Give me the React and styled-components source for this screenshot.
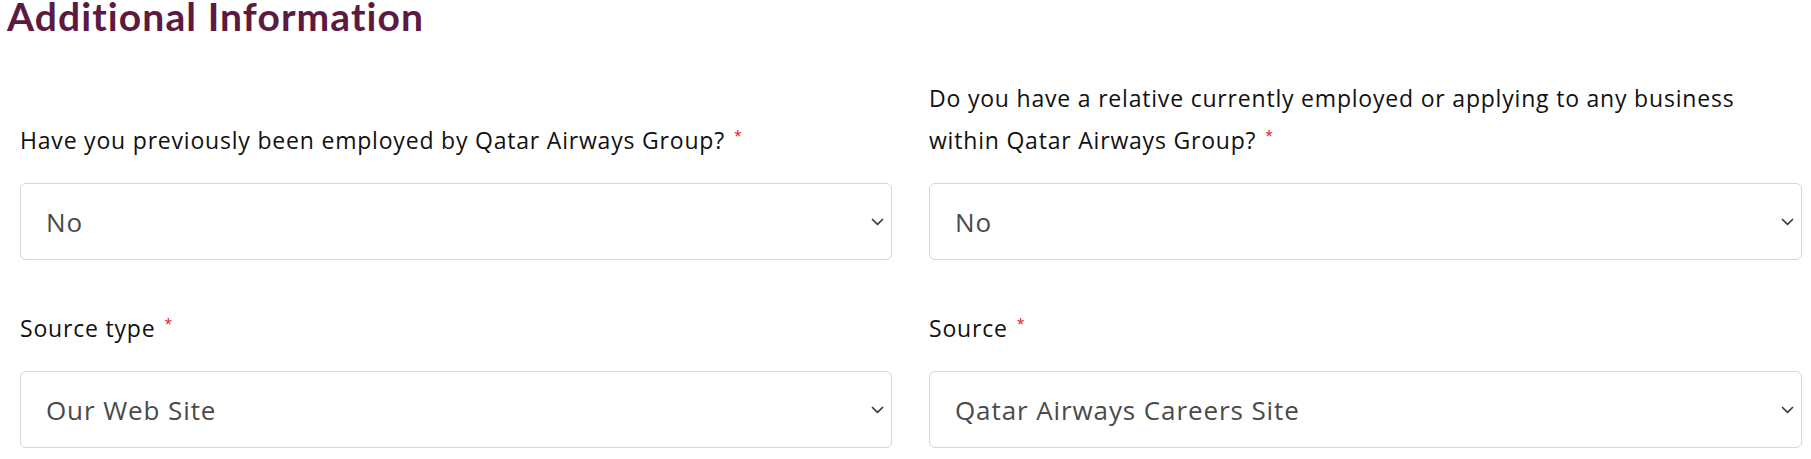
import React from "react";
import styled, { createGlobalStyle } from "styled-components";

const Global = createGlobalStyle`
  html, body { margin: 0; padding: 0; background: #ffffff; }
  body { font-family: "Open Sans", Lato, sans-serif; }
  * { box-sizing: border-box; }
`;

const Page = styled.div`
  padding: 0 9px 0 7px;
  width: 1811px;
`;

const Heading = styled.h2`
  margin: 0 0 45px 0;
  font-family: Lato, sans-serif;
  font-weight: 700;
  font-size: 39px;
  line-height: 32px;
  color: #5c1a42;
  letter-spacing: 1.1px;
`;

const Grid = styled.div`
  display: grid;
  grid-template-columns: 872px 873px;
  column-gap: 37px;
  row-gap: 47px;
  padding-left: 13px;
  align-items: end;
`;

const Field = styled.div`
  display: flex;
  flex-direction: column;
  justify-content: flex-end;
`;

const Label = styled.label`
  display: block;
  font-family: "Open Sans", sans-serif;
  font-size: 23px;
  letter-spacing: 0.8px;
  line-height: 42px;
  color: #111111;
  margin-bottom: 22px;
`;

const Req = styled.span`
  color: #e0102a;
  font-size: 14px;
  line-height: 0;
  vertical-align: 8px;
  margin-left: 9px;
`;

const SelectWrap = styled.div`
  position: relative;
  height: 77px;
`;

const Select = styled.select`
  appearance: none;
  -webkit-appearance: none;
  width: 100%;
  height: 77px;
  border: 1px solid #d6d6d6;
  border-radius: 6px;
  background: #ffffff;
  padding: 0 40px 0 25px;
  font-family: "Open Sans", sans-serif;
  font-size: 26px;
  letter-spacing: 0.9px;
  color: #4a4a4a;
  outline: none;
`;

const Chevron = styled.svg`
  position: absolute;
  right: 8px;
  top: 50%;
  margin-top: -4px;
  width: 13px;
  height: 8px;
  pointer-events: none;
`;

function Dropdown({ value, options }) {
  return (
    <SelectWrap>
      <Select defaultValue={value}>
        {options.map((o) => (
          <option key={o} value={o}>
            {o}
          </option>
        ))}
      </Select>
      <Chevron viewBox="0 0 13 8">
        <path d="M1.5 1.5 L6.5 6.3 L11.5 1.5" fill="none" stroke="#3a3a3a" strokeWidth="1.7" strokeLinecap="round" strokeLinejoin="round" />
      </Chevron>
    </SelectWrap>
  );
}

export default function App() {
  return (
    <>
      <Global />
      <Page>
        <Heading>Additional Information</Heading>
        <Grid>
          <Field>
            <Label>
              Have you previously been employed by Qatar Airways Group?<Req>*</Req>
            </Label>
            <Dropdown value="No" options={["No", "Yes"]} />
          </Field>
          <Field>
            <Label>
              Do you have a relative currently employed or applying to any business
              <br />
              within Qatar Airways Group?<Req>*</Req>
            </Label>
            <Dropdown value="No" options={["No", "Yes"]} />
          </Field>
          <Field>
            <Label>
              Source type<Req>*</Req>
            </Label>
            <Dropdown value="Our Web Site" options={["Our Web Site", "Social Media", "Referral"]} />
          </Field>
          <Field>
            <Label>
              Source<Req>*</Req>
            </Label>
            <Dropdown
              value="Qatar Airways Careers Site"
              options={["Qatar Airways Careers Site", "LinkedIn", "Other"]}
            />
          </Field>
        </Grid>
      </Page>
    </>
  );
}
